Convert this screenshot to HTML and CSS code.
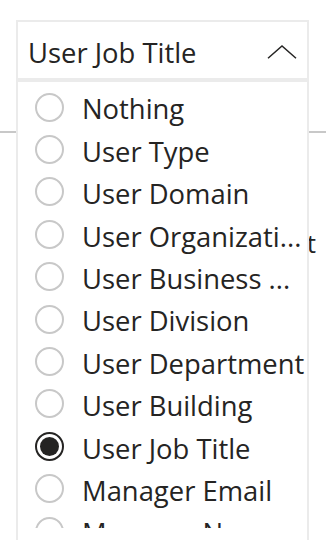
FILE: index.html
```html
<!DOCTYPE html>
<html>
<head>
<meta charset="utf-8">
<link rel="stylesheet" href="styles.css">
</head>
<body>
<div class="page">
  <div class="slicer">
    <div class="header">
      <span class="title">User Job Title</span>
      <svg class="chevron" width="30" height="14" viewBox="0 0 30 14"><polyline points="1,13.2 15,1 29,13.2" fill="none" stroke="#252423" stroke-width="1.5"/></svg>
    </div>
    <div class="menu">
      <ul class="list">
        <li class="row"><span class="radio"></span><span class="label">Nothing</span></li>
        <li class="row"><span class="radio"></span><span class="label">User Type</span></li>
        <li class="row"><span class="radio"></span><span class="label">User Domain</span></li>
        <li class="row"><span class="radio"></span><span class="label">User Organizati...</span></li>
        <li class="row"><span class="radio"></span><span class="label">User Business ...</span></li>
        <li class="row"><span class="radio"></span><span class="label">User Division</span></li>
        <li class="row"><span class="radio"></span><span class="label">User Department</span></li>
        <li class="row"><span class="radio"></span><span class="label">User Building</span></li>
        <li class="row"><span class="radio checked"></span><span class="label">User Job Title</span></li>
        <li class="row"><span class="radio"></span><span class="label">Manager Email</span></li>
        <li class="row"><span class="radio"></span><span class="label">Manager Name</span></li>
      </ul>
    </div>
  </div>
  <div class="bg">
    <div class="rule"></div>
    <p class="bgtext">Headcount</p>
  </div>
</div>
</body>
</html>
```

FILE: styles.css
```css
html, body {
  margin: 0;
  padding: 0;
  background: #ffffff;
}
body {
  width: 326px;
  height: 540px;
  overflow: hidden;
  font-family: "Open Sans", "Noto Sans", sans-serif;
  color: #252423;
}
.page {
  padding-top: 20px;
}
.slicer {
  position: relative;
  margin-left: 16px;
  width: 293px;
  z-index: 2;
}
.header {
  box-sizing: border-box;
  height: 60px;
  border: 2px solid #ebebeb;
  background: #fff;
  display: flex;
  align-items: center;
  justify-content: space-between;
  padding: 0 10px 0 10px;
}
.title {
  font-size: 27.4px;
  line-height: 1;
  position: relative;
  top: 3px;
  white-space: nowrap;
}
.chevron {
  display: block;
  position: relative;
  top: 2px;
}
.menu {
  position: absolute;
  left: 0;
  top: 60px;
  width: 293px;
  height: 480px;
  box-sizing: border-box;
  border: 2px solid #ebebeb;
  border-bottom: none;
  background: #fff;
  padding-top: 4px;
}
.list {
  list-style: none;
  margin: 0;
  padding: 0;
  height: 442px;
  overflow: hidden;
}
.row {
  height: 42.4px;
  display: flex;
  align-items: center;
  padding-left: 17px;
}
.radio {
  box-sizing: border-box;
  flex: none;
  width: 29px;
  height: 29px;
  border: 2px solid #c8c8c8;
  border-radius: 50%;
  margin-right: 18px;
  position: relative;
}
.radio.checked {
  border-color: #252423;
}
.radio.checked::after {
  content: "";
  position: absolute;
  left: 3px;
  top: 3px;
  width: 19px;
  height: 19px;
  border-radius: 50%;
  background: #252423;
}
.label {
  font-size: 27.4px;
  line-height: 1;
  white-space: nowrap;
  position: relative;
  top: 2px;
}
.bg {
  position: relative;
  z-index: 1;
}
.rule {
  margin-top: 51px;
  height: 2px;
  background: #c8c8c8;
}
.bgtext {
  margin: 97px 10px 0 0;
  text-align: right;
  font-size: 26px;
  line-height: 1;
}
```
